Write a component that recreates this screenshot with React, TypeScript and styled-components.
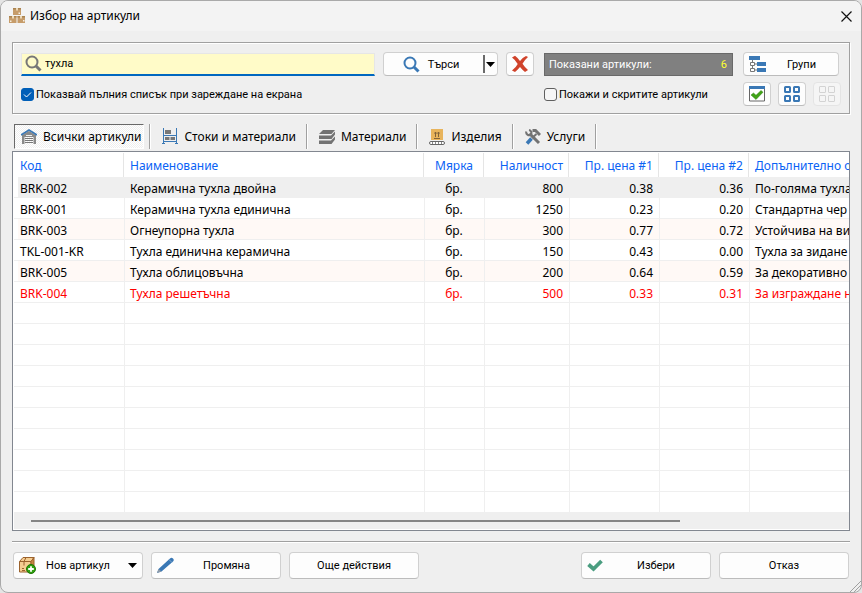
import React, { useState } from "react";
import styled, { createGlobalStyle } from "styled-components";

const UI = `"Noto Sans", "Open Sans", sans-serif`;
const SMALL = `Roboto, "Noto Sans", sans-serif`;

const GlobalStyle = createGlobalStyle`
  * { box-sizing: border-box; }
  html, body { margin: 0; background: #e4e4e4; }
  body { font-family: ${UI}; font-size: 12px; color: #000; }
  button, input { font: inherit; color: inherit; }
`;

const Window = styled.div`
  position: relative;
  display: flex;
  flex-direction: column;
  min-height: 100vh;
  border: 1px solid #a9a9a9;
  border-radius: 8px;
  background: #efefef;
  overflow: hidden;
`;

const TitleBar = styled.header`
  display: flex;
  align-items: center;
  gap: 5px;
  height: 30px;
  padding: 0 9px 0 8px;
  background: #f3f3f3;
`;

const Title = styled.h1`
  flex: 1;
  margin: 0;
  font-size: 12px;
  font-weight: 400;
  line-height: 16px;
`;

const CloseButton = styled.button`
  display: flex;
  padding: 0;
  border: 0;
  background: none;
`;

const Content = styled.main`
  display: flex;
  flex: 1;
  flex-direction: column;
  padding: 11px 11px 13px 11px;
`;

const FilterPanel = styled.section`
  display: flex;
  gap: 10px;
  padding: 9px 10px 7px 8px;
  border: 1px solid #a0a0a0;
  box-shadow: inset 1px 1px #fff, 1px 1px #fff;
  font-family: ${SMALL};
  font-size: 11px;
`;

const FilterGroup = styled.div<{ $grow?: boolean; $width?: number }>`
  display: flex;
  flex-direction: column;
  gap: 6px;
  flex: ${(p) => (p.$grow ? "1" : "none")};
  width: ${(p) => (p.$width ? `${p.$width}px` : "auto")};
`;

const FilterRow = styled.div<{ $gap?: number }>`
  display: flex;
  align-items: center;
  height: 24px;
  gap: ${(p) => p.$gap ?? 8}px;
`;

const SearchBox = styled.label`
  display: flex;
  flex: 1;
  align-items: center;
  gap: 3px;
  height: 23px;
  padding: 0 3px;
  border: 1px solid #e6e6e6;
  border-bottom: 2px solid #0067c0;
  background: #fffbc8;
`;

const SearchInput = styled.input`
  flex: 1;
  min-width: 0;
  padding: 0;
  border: 0;
  outline: 0;
  background: none;
`;

const Button = styled.button<{ $width: number; $height?: number }>`
  display: flex;
  flex: none;
  align-items: center;
  width: ${(p) => p.$width}px;
  height: ${(p) => p.$height ?? 24}px;
  padding: 0 5px;
  border: 1px solid #d0d0d0;
  border-bottom-color: #bcbcbc;
  border-radius: 4px;
  background: #fdfdfd;
  font-family: ${SMALL};
  font-size: 11px;
  &:disabled { background: #f5f5f5; border-color: #e4e4e4; }
`;

const IconButton = styled(Button)`
  justify-content: center;
  padding: 0;
`;

const ButtonText = styled.span`
  flex: 1;
  text-align: center;
  svg + & { padding-left: 4px; }
  &:not(:last-child) { padding: 0 8px 0 0; }
`;

const SplitButton = styled.div`
  display: flex;
  align-items: center;
  width: 115px;
  height: 24px;
  border: 1px solid #d0d0d0;
  border-bottom-color: #bcbcbc;
  border-radius: 4px;
  background: #fdfdfd;
`;

const SplitMain = styled.button`
  display: flex;
  flex: 1;
  align-items: center;
  justify-content: center;
  gap: 8px;
  padding: 0 5px 0 0;
  border: 0;
  background: none;
`;

const SplitArrow = styled.button`
  display: flex;
  align-items: center;
  height: 18px;
  padding: 0 2px 0 1px;
  border: 0;
  border-left: 2px solid #6a6a6a;
  background: none;
`;

const CountBox = styled.output`
  display: flex;
  flex: 1;
  align-items: center;
  justify-content: space-between;
  height: 23px;
  padding: 0 5px 0 4px;
  border: 1px solid #696969;
  background: #808080;
  color: #fff;
`;

const CountValue = styled.span`
  color: #ffff30;
`;

const CheckLabel = styled.label`
  display: flex;
  align-items: center;
  gap: 2px;
  white-space: nowrap;
`;

const CheckMark = styled.span`
  display: grid;
  width: 13px;
  height: 13px;
  > * { grid-area: 1 / 1; }
  > svg { pointer-events: none; }
`;

const CheckInput = styled.input`
  appearance: none;
  width: 13px;
  height: 13px;
  margin: 0;
  border: 1px solid #5f5f5f;
  border-radius: 3px;
  background: #f6f6f6;
  &:checked { border-color: #005fb8; background: #005fb8; }
  &:not(:checked) + svg { visibility: hidden; }
`;

const Tabs = styled.nav`
  display: flex;
  align-items: center;
  height: 29px;
  margin-top: 8px;
  padding: 1px 2px 2px;
`;

const Tab = styled.button<{ $active?: boolean }>`
  display: flex;
  align-items: center;
  gap: 6px;
  height: 25px;
  padding: 1px ${(p) => (p.$active ? 2 : 9)}px 0 ${(p) => (p.$active ? 6 : 10)}px;
  margin-right: ${(p) => (p.$active ? 5 : 0)}px;
  border: 1px solid;
  border-color: ${(p) => (p.$active ? "#696969 #fff #fff #696969" : "transparent")};
  background: ${(p) => (p.$active ? "repeating-conic-gradient(#fff 0 25%, #efefef 0 50%) 0 0 / 2px 2px" : "none")};
  font-size: 12px;
  white-space: nowrap;
`;

const TabSeparator = styled.span`
  width: 2px;
  height: 25px;
  border-left: 1px solid #a0a0a0;
  border-right: 1px solid #fff;
`;

const GridPanel = styled.section`
  display: flex;
  flex: 1;
  flex-direction: column;
  padding: 1px 0 1px 1px;
  border: 1px solid #828790;
  background: #fff;
  overflow: hidden;
`;

const Grid = styled.table`
  width: 100%;
  table-layout: fixed;
  border-collapse: separate;
  border-spacing: 0;
  font-size: 12px;
  line-height: 16px;
`;

type Align = "left" | "center" | "right";

const HeadCell = styled.th<{ $align: Align }>`
  height: 24px;
  padding: 2px 5px 0 6px;
  border-right: 1px solid #e5e5e5;
  color: #0a62f5;
  font-weight: 400;
  text-align: ${(p) => p.$align};
  white-space: nowrap;
  overflow: hidden;
  &:last-child { border-right: 0; padding-right: 0; }
`;

const Row = styled.tr<{ $tone: string; $red?: boolean }>`
  background: ${(p) => p.$tone};
  color: ${(p) => (p.$red ? "#ff0000" : "#000")};
`;

const Cell = styled.td<{ $align: Align }>`
  height: 21px;
  padding: 3px 6px 0 5px;
  border-left: 1px solid #efefef;
  border-bottom: 1px solid #efefef;
  text-align: ${(p) => p.$align};
  white-space: nowrap;
  overflow: hidden;
  &:first-child { border-left: 0; padding-left: 6px; box-shadow: inset 4px 0 #fff; }
  &:last-child { padding-right: 0; }
`;

const ScrollTrack = styled.div`
  display: flex;
  align-items: center;
  height: 16px;
  padding: 0 17px;
  margin-top: auto;
  background: #efefef;
`;

const ScrollThumb = styled.div`
  width: 81%;
  height: 2px;
  background: #858585;
`;

const Divider = styled.hr`
  width: 100%;
  height: 2px;
  margin: 10px 0 9px;
  border: 0;
  border-top: 1px solid #a0a0a0;
  border-bottom: 1px solid #fff;
`;

const Footer = styled.footer`
  display: flex;
  gap: 8px;
  padding: 0 1px;
`;

const Spacer = styled.div`
  flex: 1;
`;

const Grip = styled.svg`
  position: absolute;
  right: 0;
  bottom: 0;
`;

const Arrow = () => (
  <svg width="9" height="5" viewBox="0 0 9 5" aria-hidden="true"><path d="M0 0h9L4.500 5z" fill="#000" /></svg>
);

const BoxesIcon = () => (
  <svg width="16" height="16" viewBox="0 0 16 16" aria-hidden="true">
    <path d="M4 0h8v7H4zM0 8h7.500v7H0zM8.500 8H16v7H8.500z" fill="#c69c6a" />
    <path d="M4 0h8v1.500H4zM0 8h7.500v1.500H0zM8.500 8H16v1.500H8.500z" fill="#aa8351" />
    <path d="M7 0h2v2.500H7zM3 8h2v2.500H3zM11 8h2v2.500h-2z" fill="#ecd9b8" />
    <path d="M9.500 4.500h1.500v1.500H9.500zM1 12.500h1.500v1.500H1zM14 12h1.500v1.500H14z" fill="#f6efe2" />
  </svg>
);

const Magnifier = ({ color }: { color: string }) => (
  <svg width="17" height="17" viewBox="0 0 17 17" fill="none" stroke={color} aria-hidden="true">
    <circle cx="7" cy="7" r="5.500" strokeWidth="2" />
    <path d="M11 11l4.500 4.500" strokeWidth="3" />
  </svg>
);

const RedCross = () => (
  <svg width="18" height="18" viewBox="0 0 18 18" fill="#d0432b" aria-hidden="true">
    <path d="M1 2.500L4 .8Q7.500 3.500 9 6Q11.500 2.500 15 1L17 2Q13.500 5 11.500 8.700Q14 12.500 17 15L14 17Q11 14.500 9 12Q6.500 15 4 17L1 15.500Q5 12.500 6.700 9Q4.500 5 1 2.500z" />
  </svg>
);

const GroupsIcon = () => (
  <svg width="17" height="17" viewBox="0 0 17 17" aria-hidden="true">
    <path d="M0 0h11v4H0zM8 6h9v4H8zM8 12h9v4H8z" fill="#3a78b5" />
    <path d="M3.500 4v2M3.500 10v2M6 8h2M6 14h2" stroke="#777" />
    <path d="M1.500 6.500h4v3h-4zM1.500 12.500h4v3h-4z" fill="#fff" stroke="#777" />
  </svg>
);

const WindowCheckIcon = () => (
  <svg width="16" height="16" viewBox="0 0 16 16" aria-hidden="true">
    <path d="M.5 .5h15v14.500H.5z" fill="#fff" stroke="#666" />
    <path d="M0 0h16v3H0z" fill="#3a78b5" />
    <path d="M2 9L4.500 7l2.500 2.300L12 4.500l2 1.700L7 13.500z" fill="#41a317" stroke="#2e8510" strokeWidth=".5" />
  </svg>
);

const TilesIcon = ({ color, weight }: { color: string; weight: number }) => {
  const start = weight / 2;
  const size = 7 - weight;
  const far = start + 9;
  return (
    <svg width="16" height="16" viewBox="0 0 16 16" fill="none" stroke={color} strokeWidth={weight} aria-hidden="true">
      {[start, far].map((y) => [start, far].map((x) => (
        <rect key={`${x}-${y}`} x={x} y={y} width={size} height={size} rx=".5" />
      )))}
    </svg>
  );
};

const WarehouseIcon = () => (
  <svg width="16" height="16" viewBox="0 0 16 16" aria-hidden="true">
    <path d="M1 6L8 2l7 4v9h-2.500V8h-9v7H1z" fill="#8a8a8a" />
    <path d="M4 9.500h8M4 11.500h8M4 13.500h8" stroke="#777" fill="none" />
    <path d="M5 6.500h6" stroke="#efefef" />
    <path d="M0 6L8 1l8 5" stroke="#3a78b5" strokeWidth="1.500" fill="none" />
  </svg>
);

const ShelfIcon = () => (
  <svg width="16" height="17" viewBox="0 0 16 17" aria-hidden="true">
    <path d="M1.500 0v15.500M14.500 0v15.500M1 7.500h14M1 13.500h14M0 15.500h3M13 15.500h3" stroke="#3a78b5" />
    <path d="M3 2h6v4H3zM3 9h4.500v3H3zM8.500 9H13v3H8.500z" fill="#777" />
  </svg>
);

const LayersIcon = () => (
  <svg width="16" height="14" viewBox="0 0 16 14" fill="#737373" aria-hidden="true">
    <path d="M4 0H16L12.500 4H0z" />
    <path d="M0 5.500h12L16 1.500v3L12.500 9H0z" />
    <path d="M0 10.500h12L16 6.500v3L12.500 14H0z" />
  </svg>
);

const ProductIcon = () => (
  <svg width="16" height="16" viewBox="0 0 16 16" aria-hidden="true">
    <path d="M2 0h12v11H2z" fill="#e8b45c" />
    <path d="M6.500 3v5M9.500 3v5M5 9.500h6M5.500 4.500l1-1.500 1 1.500M8.500 4.500l1-1.500 1 1.500" stroke="#81633a" fill="none" />
    <rect x=".5" y="12.500" width="15" height="3" rx="1.500" fill="#fff" stroke="#666" />
    <path d="M3 14h1M6 14h1M9 14h1M12 14h1" stroke="#666" strokeWidth="1.500" />
  </svg>
);

const ToolsIcon = () => (
  <svg width="16" height="16" viewBox="0 0 16 16" fill="none" aria-hidden="true">
    <path d="M4.500 4.500L14 14" stroke="#737373" strokeWidth="3" />
    <path d="M1.300 2.500a3 3 0 0 0 4.500 3.300A3 3 0 0 0 4 1" stroke="#737373" strokeWidth="2" />
    <path d="M11.500 5L7 9" stroke="#737373" strokeWidth="2" />
    <path d="M7.500 1.500h3l4.500 4.500" stroke="#737373" strokeWidth="3" />
    <path d="M6.500 9.500L2 14.500" stroke="#3a78b5" strokeWidth="3.500" />
  </svg>
);

const NewBoxIcon = () => (
  <svg width="17" height="17" viewBox="0 0 17 17" aria-hidden="true">
    <path d="M.5 4.500L4 .5h11l-3 4v10.500H.5z" fill="#f5cd91" stroke="#9b622c" />
    <path d="M12 4.500l3-4V12l-3 3z" fill="#c68642" stroke="#9b622c" />
    <path d="M.5 4.500H12M7 .5l-2 4v4" stroke="#9b622c" fill="none" />
    <path d="M3 13.500h3M3 11.500h2" stroke="#9b622c" />
    <circle cx="12" cy="12" r="4.500" fill="#30a010" stroke="#1c7405" />
    <path d="M12 9.200v5.600M9.200 12h5.600" stroke="#fff" strokeWidth="1.800" />
  </svg>
);

const PencilIcon = () => (
  <svg width="17" height="17" viewBox="0 0 17 17" aria-hidden="true">
    <path d="M0 16l1.500-4L13 1.500q1.500-1.500 3 0t0 3L4.500 14.500z" fill="#3a78b5" />
    <path d="M0 16l1.500-4 3 2.500z" fill="#8d9aa8" />
    <path d="M12 2.500l3 3" stroke="#9dbbd8" strokeWidth=".7" />
  </svg>
);

const GreenCheck = () => (
  <svg width="16" height="13" viewBox="0 0 16 13" fill="none" aria-hidden="true">
    <path d="M1.500 5.500l5 4.500 8-8" stroke="#4a9d80" strokeWidth="3.800" />
  </svg>
);

interface Column { title: string; width?: number; align: Align }

const columns: Column[] = [
  { title: "Код", width: 110, align: "left" },
  { title: "Наименование", width: 300, align: "left" },
  { title: "Мярка", width: 60, align: "center" },
  { title: "Наличност", width: 85, align: "right" },
  { title: "Пр. цена #1", width: 90, align: "right" },
  { title: "Пр. цена #2", width: 90, align: "right" },
  { title: "Допълнително о", align: "left" },
];

const rows: string[][] = [
  ["BRK-002", "Керамична тухла двойна", "бр.", "800", "0.38", "0.36", "По-голяма тухла"],
  ["BRK-001", "Керамична тухла единична", "бр.", "1250", "0.23", "0.20", "Стандартна чер"],
  ["BRK-003", "Огнеупорна тухла", "бр.", "300", "0.77", "0.72", "Устойчива на ви"],
  ["TKL-001-KR", "Тухла единична керамична", "бр.", "150", "0.43", "0.00", "Тухла за зидане"],
  ["BRK-005", "Тухла облицовъчна", "бр.", "200", "0.64", "0.59", "За декоративно"],
  ["BRK-004", "Тухла решетъчна", "бр.", "500", "0.33", "0.31", "За изграждане н"],
];

const EMPTY_ROWS = 10;
const tabs = [
  { label: "Всички артикули", Icon: WarehouseIcon },
  { label: "Стоки и материали", Icon: ShelfIcon },
  { label: "Материали", Icon: LayersIcon },
  { label: "Изделия", Icon: ProductIcon },
  { label: "Услуги", Icon: ToolsIcon },
];

const rowTone = (index: number) => (index === 0 ? "#efefef" : index % 2 === 0 ? "#fff9f6" : "#fff");

const CheckBox = ({ label, initial }: { label: string; initial: boolean }) => (
  <CheckLabel>
    <CheckMark>
      <CheckInput type="checkbox" defaultChecked={initial} />
      <svg width="13" height="13" viewBox="0 0 13 13" fill="none" stroke="#fff" aria-hidden="true"><path d="M3 6.500l2.500 2.500L10 4.500" /></svg>
    </CheckMark>
    {label}
  </CheckLabel>
);

export default function App() {
  const [query, setQuery] = useState("тухла");
  return (
    <>
      <GlobalStyle />
      <Window>
        <TitleBar>
          <BoxesIcon />
          <Title>Избор на артикули</Title>
          <CloseButton aria-label="Затвори">
            <svg width="11" height="11" viewBox="0 0 11 11" stroke="#111" strokeWidth="1.200"><path d="M.5 .5l10 10M10.500 .5l-10 10" /></svg>
          </CloseButton>
        </TitleBar>
        <Content>
          <FilterPanel>
            <FilterGroup $grow>
              <FilterRow>
                <SearchBox>
                  <Magnifier color="#777" />
                  <SearchInput aria-label="Търсене" value={query} onChange={(e) => setQuery(e.target.value)} />
                </SearchBox>
                <SplitButton>
                  <SplitMain><Magnifier color="#3a78b5" />Търси</SplitMain>
                  <SplitArrow aria-label="Опции за търсене"><Arrow /></SplitArrow>
                </SplitButton>
                <IconButton $width={28} aria-label="Изчисти"><RedCross /></IconButton>
              </FilterRow>
              <FilterRow><CheckBox label="Показвай пълния списък при зареждане на екрана" initial /></FilterRow>
            </FilterGroup>
            <FilterGroup $width={189}>
              <FilterRow><CountBox>Показани артикули:<CountValue>6</CountValue></CountBox></FilterRow>
              <FilterRow><CheckBox label="Покажи и скритите артикули" initial={false} /></FilterRow>
            </FilterGroup>
            <FilterGroup $width={96}>
              <FilterRow><Button $width={96}><GroupsIcon /><ButtonText>Групи</ButtonText></Button></FilterRow>
              <FilterRow $gap={7}>
                <IconButton $width={28} aria-label="Избрани"><WindowCheckIcon /></IconButton>
                <IconButton $width={28} aria-label="Плочки"><TilesIcon color="#3a78b5" weight={2} /></IconButton>
                <IconButton $width={28} aria-label="Малки плочки" disabled><TilesIcon color="#d3d3d3" weight={1} /></IconButton>
              </FilterRow>
            </FilterGroup>
          </FilterPanel>
          <Tabs role="tablist">
            {tabs.map(({ label, Icon }, i) => (
              <React.Fragment key={label}>
                <Tab role="tab" aria-selected={i === 0} $active={i === 0}><Icon />{label}</Tab>
                <TabSeparator />
              </React.Fragment>
            ))}
          </Tabs>
          <GridPanel>
            <Grid>
              <colgroup>{columns.map((c) => <col key={c.title} width={c.width} />)}</colgroup>
              <thead>
                <tr>{columns.map((c) => <HeadCell key={c.title} $align={c.align} scope="col">{c.title}</HeadCell>)}</tr>
              </thead>
              <tbody>
                {rows.map((cells, r) => (
                  <Row key={cells[0]} $tone={rowTone(r)} $red={r === rows.length - 1}>
                    {cells.map((text, c) => <Cell key={c} $align={columns[c].align}>{text}</Cell>)}
                  </Row>
                ))}
                {Array.from({ length: EMPTY_ROWS }, (_, r) => (
                  <Row key={r} $tone="#fff">{columns.map((c) => <Cell key={c.title} $align={c.align} />)}</Row>
                ))}
              </tbody>
            </Grid>
            <ScrollTrack><ScrollThumb /></ScrollTrack>
          </GridPanel>
          <Divider />
          <Footer>
            <Button $width={130} $height={27}><NewBoxIcon /><ButtonText>Нов артикул</ButtonText><Arrow /></Button>
            <Button $width={130} $height={27}><PencilIcon /><ButtonText>Промяна</ButtonText></Button>
            <Button $width={130} $height={27}><ButtonText>Още действия</ButtonText></Button>
            <Spacer />
            <Button $width={130} $height={27}><GreenCheck /><ButtonText>Избери</ButtonText></Button>
            <Button $width={130} $height={27}><ButtonText>Отказ</ButtonText></Button>
          </Footer>
        </Content>
        <Grip width="12" height="12" viewBox="0 0 12 12" aria-hidden="true"><path d="M1 12L12 1M5 12l7-7M9 12l3-3" stroke="#a0a0a0" /></Grip>
      </Window>
    </>
  );
}
